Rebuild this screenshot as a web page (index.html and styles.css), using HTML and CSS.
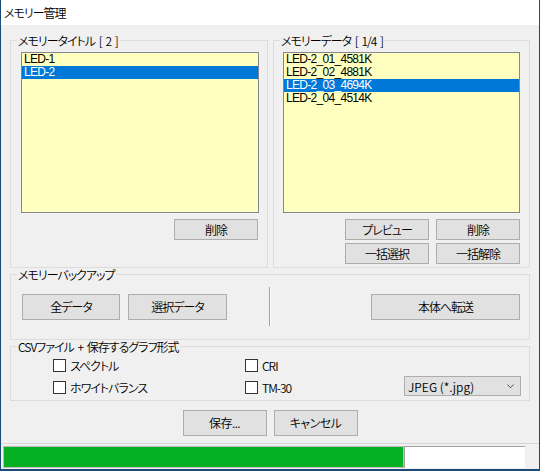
FILE: index.html
```html
<!DOCTYPE html>
<html lang="ja">
<head>
<meta charset="utf-8">
<title>メモリー管理</title>
<link rel="stylesheet" href="styles.css">
</head>
<body>
<div class="window">
  <div class="titlebar">メモリー管理</div>
  <div class="content">
    <div class="row-top">
      <fieldset class="group group-title">
        <legend>メモリータイトル [ 2 ]</legend>
        <div class="listbox">
          <div class="item">LED-1</div>
          <div class="item sel">LED-2</div>
        </div>
        <div class="btnrow"><button class="btn">削除</button></div>
      </fieldset>
      <fieldset class="group group-data">
        <legend>メモリーデータ [ 1/4 ]</legend>
        <div class="listbox">
          <div class="item">LED-2_01_4581K</div>
          <div class="item">LED-2_02_4881K</div>
          <div class="item sel">LED-2_03_4694K</div>
          <div class="item">LED-2_04_4514K</div>
        </div>
        <div class="btngrid">
          <button class="btn">プレビュー</button>
          <button class="btn">削除</button>
          <button class="btn">一括選択</button>
          <button class="btn">一括解除</button>
        </div>
      </fieldset>
    </div>
    <fieldset class="group group-backup">
      <legend>メモリーバックアップ</legend>
      <div class="backup-row">
        <button class="btn btn-all">全データ</button>
        <button class="btn btn-sel">選択データ</button>
        <div class="vsep"></div>
        <button class="btn btn-send">本体へ転送</button>
      </div>
    </fieldset>
    <fieldset class="group group-csv">
      <legend>CSVファイル + 保存するグラフ形式</legend>
      <div class="csv-grid">
        <label class="check c1r1"><span class="box"></span><span>スペクトル</span></label>
        <label class="check c2r1"><span class="box"></span><span>CRI</span></label>
        <label class="check c1r2"><span class="box"></span><span>ホワイトバランス</span></label>
        <label class="check c2r2"><span class="box"></span><span>TM-30</span></label>
        <div class="select"><span>JPEG (*.jpg)</span><svg class="chev" width="7" height="5" viewBox="0 0 7 5"><polyline points="0.5,0.5 3.5,3.8 6.5,0.5" fill="none" stroke="#555" stroke-width="1"/></svg></div>
      </div>
    </fieldset>
    <div class="actions">
      <button class="btn btn-big">保存...</button>
      <button class="btn btn-big">キャンセル</button>
    </div>
  </div>
  <div class="statusbar">
    <div class="progress"></div>
    <div class="statuspane"></div>
  </div>
</div>
</body>
</html>
```
FILE: styles.css
```css
* { box-sizing: border-box; }
html, body { margin: 0; padding: 0; }
body {
  width: 540px;
  height: 471px;
  overflow: hidden;
  background: #f0f0f0;
  font-family: "Noto Sans CJK JP", sans-serif;
  font-size: 12px;
  font-weight: 350;
  letter-spacing: -1px;
  word-spacing: 2px;
  color: #000;
  font-feature-settings: "palt";
}
.window {
  width: 540px;
  height: 471px;
  background: #f0f0f0;
  border: 1px solid #1c4a78;
  border-top: none;
  border-bottom-width: 2px;
  display: flex;
  flex-direction: column;
}
.titlebar {
  flex: none;
  height: 25px;
  line-height: 25px;
  background: #fff;
  padding-left: 3px;
}
.content {
  flex: 1;
  padding: 9px 9px 0 9px;
  display: flex;
  flex-direction: column;
}
.row-top {
  display: flex;
  gap: 5px;
  height: 234px;
}
fieldset.group {
  margin: 0;
  padding: 0;
  border: 1px solid #dcdcdc;
  min-width: 0;
}
.group legend {
  margin-left: 6px;
  padding: 0 1px;
  height: 13px;
  line-height: 13px;
  font-size: 12px;
}
.group-title { width: 258px; }
.group-data { width: 257px; }
.listbox {
  background: #ffffc0;
  border: 1px solid #828790;
  height: 161px;
  margin-top: 5px;
}
.group-title .listbox { margin-left: 10px; width: 238px; }
.group-data .listbox { margin-left: 9px; width: 237px; }
.item {
  height: 13px;
  line-height: 13px;
  padding-left: 2px;
  font-family: "Liberation Sans", sans-serif;
  font-weight: 400;
  font-size: 12px;
  letter-spacing: -0.7px;
  word-spacing: 0;
  white-space: nowrap;
}
.item.sel { background: #0078d7; color: #fff; }
.btn {
  margin: 0;
  padding: 0;
  font-family: inherit;
  font-size: 12px;
  font-weight: inherit;
  letter-spacing: inherit;
  word-spacing: inherit;
  font-feature-settings: "palt";
  color: #000;
  background: #e1e1e1;
  border: 1px solid #adadad;
  width: 84px;
  height: 21px;
  line-height: 19px;
}
.btnrow {
  display: flex;
  justify-content: flex-end;
  margin-top: 6px;
  padding-right: 9px;
}
.btngrid {
  display: grid;
  grid-template-columns: 84px 84px;
  gap: 3px 7px;
  justify-content: end;
  margin-top: 6px;
  padding-right: 9px;
}
.group-backup { margin-top: 7px; }
.backup-row {
  display: flex;
  align-items: center;
  padding: 6px 9px 13px 11px;
}
.backup-row .btn { height: 26px; line-height: 24px; }
.btn-all { width: 98px; }
.btn-sel { width: 99px; margin-left: 8px; }
.vsep {
  width: 2px;
  height: 39px;
  margin-left: 42px;
  border-left: 1px solid #a0a0a0;
  border-right: 1px solid #fff;
}
.btn-send { width: 149px; margin-left: auto; }
.group-csv { margin-top: 7px; }
.csv-grid {
  display: grid;
  grid-template-columns: 192px 159px 117px;
  grid-template-rows: 22px 22px;
  padding: 1px 0 2px 42px;
}
.check {
  display: flex;
  align-items: center;
  gap: 4px;
}
.c1r1 { grid-column: 1; grid-row: 1; }
.c2r1 { grid-column: 2; grid-row: 1; }
.c1r2 { grid-column: 1; grid-row: 2; }
.c2r2 { grid-column: 2; grid-row: 2; }
.box {
  width: 13px;
  height: 13px;
  background: #fff;
  border: 1px solid #333;
  flex: none;
}
.select {
  grid-column: 3;
  grid-row: 2;
  align-self: start;
  width: 117px;
  height: 20px;
  background: #e1e1e1;
  border: 1px solid #adadad;
  display: flex;
  align-items: center;
  justify-content: space-between;
  padding: 0 6px 0 3px;
  letter-spacing: 0;
  word-spacing: 0;
}
.chev { display: block; }
.actions {
  display: flex;
  justify-content: center;
  gap: 7px;
  margin-top: 9px;
}
.btn-big { height: 26px; line-height: 24px; letter-spacing: -0.5px; }
.statusbar {
  flex: none;
  height: 26px;
  border-top: 1px solid #d7d7d7;
  display: flex;
  padding: 2px 0 1px 2px;
}
.progress {
  width: 401px;
  height: 22px;
  background: #06b025;
  border: 1px solid #bcbcbc;
}
.statuspane {
  width: 121px;
  height: 22px;
  background: #fff;
  border-top: 1px solid #a0a0a0;
  border-left: 1px solid #a0a0a0;
}
```
